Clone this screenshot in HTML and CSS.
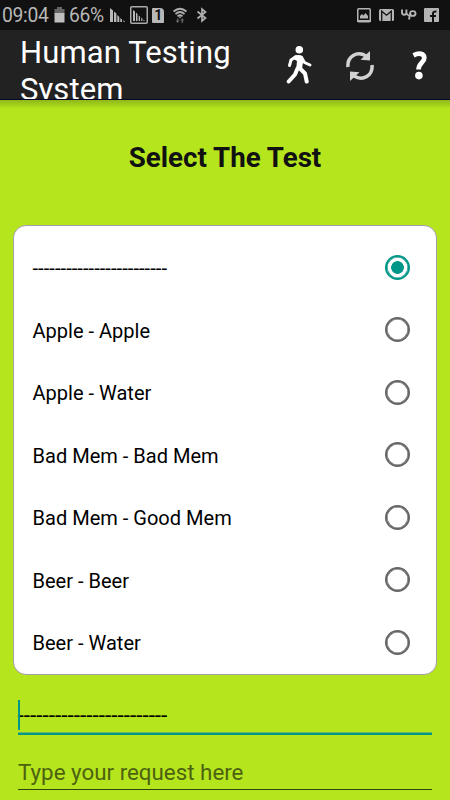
FILE: index.html
```html
<!DOCTYPE html>
<html lang="en">
<head>
<meta charset="utf-8">
<title>Human Testing System</title>
<link rel="stylesheet" href="styles.css">
</head>
<body>
<div class="status">
  <span class="clock">09:04</span>
  <svg class="battery" width="11" height="16" viewBox="0 0 11 16"><path fill="#666" d="M3 0h5v2h2.500v5H.5V2H3z"/><path fill="#bebebe" d="M.5 6h10v9.500H.5z"/></svg>
  <span class="percent">66%</span>
  <svg class="signal" width="16" height="16" viewBox="0 0 16 16" fill="#b8b8b8"><path d="M0 1l3 2.500V15H0zM4 4.500l2.400 2V15H4zM7.300 8l2 2v5h-2zM10.300 11l1.700 1.500V15h-1.700zM13.500 13l1.500 2h-1.500z"/></svg>
  <svg class="boxed" width="18" height="18" viewBox="0 0 18 18"><rect x=".75" y=".75" width="16.500" height="16.500" rx="1" fill="none" stroke="#aaa" stroke-width="1.500"/><path fill="#b8b8b8" d="M3 4l2 1.500V15H3zM6 6.500L7.500 8v7H6zM8.700 9.500l1.300 1V15H8.700zM11.200 11.500l1.200 1V15h-1.200zM13.500 13.500L15 15h-1.500z"/></svg>
  <span class="sim">1</span>
  <svg class="wifi" width="16" height="17" viewBox="0 0 16 17" fill="none"><path stroke="#b0b0b0" stroke-width="1.700" d="M1.500 4.500Q8-1 14.500 4.500M3.500 7Q8 3 12.500 7M5.500 9.300Q8 7 10.500 9.300"/><path fill="#b0b0b0" d="M6.500 9.500h3L8 11.500z"/><path fill="#666" d="M5 11.500h1.300v2h1.400L5.600 16 3.500 13.500H5zM9.600 16h1.300v-2.500h1.400l-2-2.200-2.100 2.200h1.400z"/></svg>
  <svg class="bluetooth" width="12" height="16" viewBox="0 0 12 16" fill="none" stroke="#b0b0b0" stroke-width="1.700"><path d="M1.500 4.500l8 6.500L6 14V2l3.500 3-8 6.500"/></svg>
  <span class="space"></span>
  <svg class="picture" width="14" height="15" viewBox="0 0 14 15"><rect x=".75" y=".75" width="12.500" height="13" rx="1" fill="none" stroke="#b4b4b4" stroke-width="1.500"/><path fill="#b4b4b4" d="M0 12h14v2H0zM3 10.500V8l2-2 1.500 1.500L8.500 5 11 8v2.500z"/></svg>
  <svg class="mail" width="15" height="12" viewBox="0 0 15 12"><rect width="15" height="12" rx="1.500" fill="#b4b4b4"/><path d="M2.700 12V2.200l4.800 4 4.800-4V12" fill="none" stroke="#121212" stroke-width="1.300"/></svg>
  <svg class="up" width="16" height="11" viewBox="0 0 16 11" fill="none" stroke="#b4b4b4" stroke-width="1.900"><path d="M1 .5v3a2.200 2.200 0 0 0 4.400 0v-3M5.400 4q.8 2.300 2.600 2.600M8 10.500L9.200 4.500"/><ellipse cx="11.800" cy="4.500" rx="2.700" ry="2.400"/></svg>
  <svg class="facebook" width="15" height="14" viewBox="0 0 15 14"><rect width="15" height="14" rx="1" fill="#b4b4b4"/><path fill="none" stroke="#121212" stroke-width="2" d="M9 14V5.500Q9 3.300 12.500 3.500M6 8h6"/></svg>
</div>
<header class="bar">
  <h1 class="title">Human Testing System</h1>
  <svg class="walk" width="26" height="38" viewBox="0 0 26 38"><circle cx="13.300" cy="3.800" r="3.800" fill="#fff"/><g fill="none" stroke="#fff" stroke-linecap="round" stroke-linejoin="round"><path stroke-width="3" d="M10 10.500l-5 3.500-1.500 5.500M15.500 11.500l3 5L24 19"/><path stroke-width="4" d="M11.500 22.500L9 28.500l-6.300 7M13.500 22l5.500 5.500 1.700 8"/></g><path fill="#fff" d="M8 10.500Q12 8 16.500 10l1 2.500-1.500 10.500-6 2 1-10-3.500-2z"/></svg>
  <svg class="refresh" width="28" height="30" viewBox="0 0 28 30"><g fill="none" stroke="#d2d2d2" stroke-width="3.500"><path d="M2 16C1 5.500 11 -.5 20 5"/><path d="M26 14C27 24.500 17 30.500 8 25"/></g><path fill="#d2d2d2" d="M24 0v9.500L14.500 8.800zM4 30V20.500l9.500 .8z"/></svg>
  <svg class="help" width="16" height="29" viewBox="0 0 16 29"><path fill="none" stroke="#fff" stroke-width="4.700" d="M1.500 4.300C7 1.500 12.300 2.300 12.300 7c0 4.500-5.800 5-5.800 11.500"/><circle cx="6.900" cy="24.600" r="3.800" fill="#fff"/></svg>
</header>
<main class="content">
  <h2 class="heading">Select The Test</h2>
  <div class="card">
    <div class="row dashes"><span>------------------------</span><i class="radio checked"></i></div>
    <div class="row"><span>Apple - Apple</span><i class="radio"></i></div>
    <div class="row"><span>Apple - Water</span><i class="radio"></i></div>
    <div class="row"><span>Bad Mem - Bad Mem</span><i class="radio"></i></div>
    <div class="row"><span>Bad Mem - Good Mem</span><i class="radio"></i></div>
    <div class="row"><span>Beer - Beer</span><i class="radio"></i></div>
    <div class="row"><span>Beer - Water</span><i class="radio"></i></div>
  </div>
  <div class="field active"><i class="caret"></i><span>------------------------</span></div>
  <div class="field request"><span>Type your request here</span></div>
</main>
</body>
</html>
```
FILE: styles.css
```css
* { box-sizing: border-box; }
body { margin: 0; width: 450px; height: 800px; overflow: hidden; background: #b5e61d; font-family: Roboto, sans-serif; color: #000; }
svg { display: block; flex: none; }
.status { display: flex; align-items: center; height: 30px; padding: 0 11px 0 2px; background: #111; color: #b8b8b8; font-size: 19.3px; line-height: 30px; letter-spacing: -0.3px; }
.clock, .percent { padding-top: 2px; }
.clock { width: 52px; }
.percent { width: 40px; margin-left: 4px; }
.signal { margin-left: 1px; }
.boxed { margin-left: 4px; }
.sim { width: 12px; height: 15px; margin-left: 4px; background: #b8b8b8; color: #111; border-radius: 1px 4px 1px 1px; font-size: 14px; font-weight: 700; line-height: 15px; text-align: center; }
.wifi { margin-left: 8px; }
.bluetooth { margin-left: 8px; }
.space { flex: 1; }
.mail { margin-left: 8px; }
.up { margin: -2px 0 0 7px; }
.facebook { margin-left: 7px; }
.bar { display: flex; height: 70px; padding-left: 20px; overflow: hidden; background: #222; border-bottom: 1px solid #050529; }
.title { width: 230px; margin: 4px 0 0; color: #fff; font-size: 31px; font-weight: 400; line-height: 37px; letter-spacing: 0.12px; }
.walk { margin: 16px 0 0 36px; }
.refresh { margin: 21px 0 0 34px; }
.help { margin: 21px 0 0 38px; }
.content { display: flex; flex-direction: column; height: 700px; background: linear-gradient(#8eb71a, #b5e61d 9px); }
.heading { margin: 38px 0 0; color: #111; font-size: 27.7px; font-weight: 700; line-height: 40px; text-align: center; }
.card { height: 450px; margin: 47px 13px 0; padding: 10px 26px 0 19px; background: #fff; border: 1px solid #a59dac; border-radius: 13px; }
.row { display: flex; justify-content: space-between; align-items: center; height: 62.5px; font-size: 20.05px; }
.row span { margin: 2px 0 0 -0.5px; }
.dashes { font-size: 20.3px; }
.radio { width: 25px; height: 25px; border: 2px solid #666; border-radius: 50%; box-shadow: inset 0 0 0 0.6px #666; }
.checked { border-color: #009688; background: radial-gradient(circle, #009688 6px, #fff 6.7px); box-shadow: inset 0 0 0 0.6px #009688; }
.field { position: relative; margin: 0 18px; white-space: nowrap; }
.active { height: 60px; border-bottom: 2px solid #009688; box-shadow: inset 0 -1px #62b85a; font-size: 22.6px; line-height: 81px; }
.active span { margin-left: -0.5px; }
.caret { position: absolute; left: 0; top: 25px; width: 2px; height: 30px; background: #009688; }
.request { height: 55px; border-bottom: 1px solid #35440d; color: #4d6211; font-size: 22.35px; line-height: 74px; }
```
